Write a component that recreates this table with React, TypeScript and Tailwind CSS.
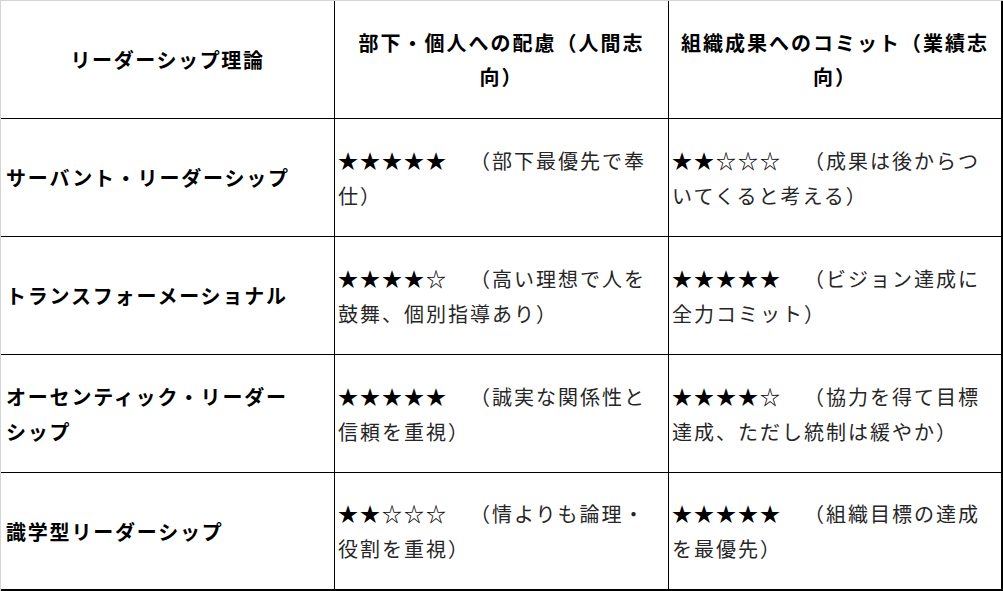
import React from "react";

type Row = {
  name: string;
  people: [string, string];
  result: [string, string];
};

const rows: Row[] = [
  {
    name: "サーバント・リーダーシップ",
    people: ["★★★★★", "（部下最優先で奉仕）"],
    result: ["★★☆☆☆", "（成果は後からついてくると考える）"],
  },
  {
    name: "トランスフォーメーショナル",
    people: ["★★★★☆", "（高い理想で人を鼓舞、個別指導あり）"],
    result: ["★★★★★", "（ビジョン達成に全力コミット）"],
  },
  {
    name: "オーセンティック・リーダーシップ",
    people: ["★★★★★", "（誠実な関係性と信頼を重視）"],
    result: ["★★★★☆", "（協力を得て目標達成、ただし統制は緩やか）"],
  },
  {
    name: "識学型リーダーシップ",
    people: ["★★☆☆☆", "（情よりも論理・役割を重視）"],
    result: ["★★★★★", "（組織目標の達成を最優先）"],
  },
];

const font = "font-['Noto_Sans_CJK_JP','Noto_Sans',sans-serif]";

function Rating({ value, last, lastRow }: { value: [string, string]; last?: boolean; lastRow?: boolean }) {
  return (
    <div
      className={`flex items-center border-black ${last ? "border-r-2 pr-[9px]" : "border-r pr-[10px]"} ${
        lastRow ? "border-b-2" : "border-b"
      } pl-[3px]`}
    >
      <p className="text-[20px] leading-[35px] tracking-[2px] text-[#262626] [line-break:strict] [text-spacing-trim:space-all]">
        <span className="text-black">{value[0]}</span>
        {"　"}
        {value[1]}
      </p>
    </div>
  );
}

export default function App() {
  return (
    <div
      lang="ja"
      className={`w-[1003px] h-[591px] bg-white border-t border-l border-[#d4d4d4] grid grid-cols-[334px_334px_334px] grid-rows-[118px_118px_118px_118px_118px] ${font}`}
    >
      <div className="flex items-center justify-center text-center border-r border-b border-black px-[6px]">
        <p className="text-[20px] leading-[34px] tracking-[1.6px] font-bold text-black [line-break:strict] [text-spacing-trim:space-all]">
          リーダーシップ理論
        </p>
      </div>
      <div className="flex items-center justify-center text-center border-r border-b border-black px-[6px]">
        <p className="text-[20px] leading-[34px] tracking-[2px] font-bold text-black [line-break:strict] [text-spacing-trim:space-all]">
          部下・個人への配慮（人間志向）
        </p>
      </div>
      <div className="flex items-center justify-center text-center border-r-2 border-b border-black px-[6px]">
        <p className="text-[20px] leading-[34px] tracking-[2px] font-bold text-black [line-break:strict] [text-spacing-trim:space-all]">
          組織成果へのコミット（業績志向）
        </p>
      </div>
      {rows.map((r, i) => {
        const lastRow = i === rows.length - 1;
        return (
          <React.Fragment key={r.name}>
            <div
              className={`flex items-center border-r border-black ${lastRow ? "border-b-2" : "border-b"} pl-[5px] pr-[25px]`}
            >
              <p className="text-[20px] leading-[35px] tracking-[1.8px] font-bold text-black [line-break:strict] [text-spacing-trim:space-all]">
                {r.name}
              </p>
            </div>
            <Rating value={r.people} lastRow={lastRow} />
            <Rating value={r.result} last lastRow={lastRow} />
          </React.Fragment>
        );
      })}
    </div>
  );
}
